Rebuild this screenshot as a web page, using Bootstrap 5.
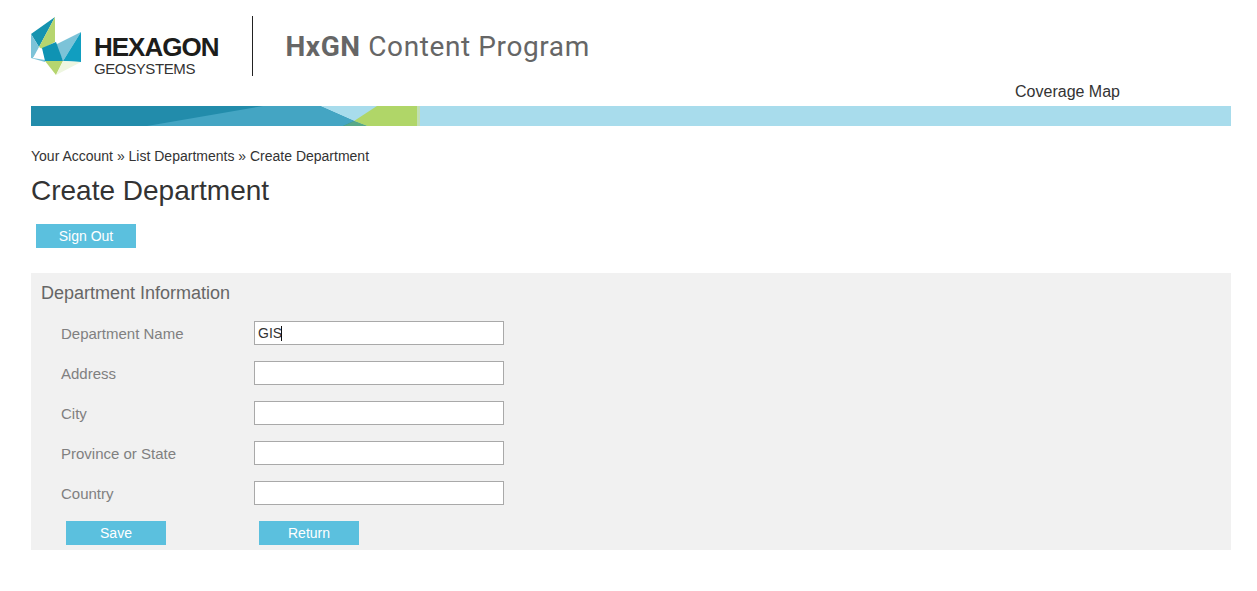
<!DOCTYPE html>
<html>
  <head>
    <title>Create Department</title>
    <link
      href="https://cdn.jsdelivr.net/npm/bootstrap@5.3.3/dist/css/bootstrap.min.css"
      rel="stylesheet"
    />
    <script src="https://cdn.jsdelivr.net/npm/bootstrap@5.3.3/dist/js/bootstrap.bundle.min.js"></script>
    <style>
      body {
        font-family: "Liberation Sans", Arial, sans-serif;
        color: #333;
        background: #fff;
      }
      .page-wrap {
        width: 1200px;
        margin-left: 31px;
      }
      .logo-row {
        height: 60px;
        margin-top: 16px;
      }
      .logo-words {
        margin-left: 13px;
        margin-top: 19px;
        color: #1d1d1b;
        line-height: 1;
      }
      .logo-name {
        font-size: 26px;
        font-weight: 700;
        letter-spacing: -1px;
        line-height: 24px;
      }
      .logo-sub {
        font-size: 15px;
        letter-spacing: -0.4px;
        line-height: 15px;
        margin-top: 2px;
        color: #333;
      }
      .logo-divider {
        width: 1px;
        height: 60px;
        background: #222;
        margin-left: 34px;
        margin-right: 32px;
      }
      .program-title {
        font-family: Roboto, sans-serif;
        font-size: 28px;
        color: #666;
        letter-spacing: 0.6px;
        line-height: 62px;
      }
      .top-link {
        color: #333;
        font-size: 16px;
        line-height: 18px;
        margin-top: 7px;
        padding-right: 111px;
        text-decoration: none;
      }
      .banner-strip {
        display: block;
        width: 1200px;
        height: 20px;
        margin-top: 5px;
      }
      .crumbs {
        font-size: 14px;
        line-height: 16px;
        margin-top: 22px;
        color: #333;
      }
      .crumbs a {
        color: #333;
        text-decoration: none;
      }
      .page-title {
        font-size: 28px;
        font-weight: 400;
        line-height: 32px;
        margin: 11px 0 0;
        color: #333;
      }
      .blue-btn {
        display: block;
        width: 100px;
        height: 24px;
        padding: 0;
        border: 0;
        border-radius: 0;
        background: #5bc0de;
        color: #fff;
        font-size: 14px;
        line-height: 24px;
        text-align: center;
      }
      .signout-row {
        padding-left: 5px;
        margin-top: 17px;
      }
      .info-panel {
        background: #f1f1f1;
        margin-top: 25px;
        height: 277px;
        padding: 10px 10px 0;
      }
      .info-title {
        font-size: 18px;
        font-weight: 400;
        line-height: 20px;
        color: #666;
        margin: 0 0 18px;
      }
      .field-row {
        height: 24px;
        margin-bottom: 16px;
        padding-left: 20px;
      }
      .field-label {
        width: 193px;
        margin: 0;
        font-size: 15px;
        line-height: 26px;
        color: #808080;
      }
      .field-box {
        width: 250px;
        height: 24px;
      }
      .field-box input {
        display: block;
        width: 250px;
        height: 24px;
        padding: 0 3px;
        border: 1px solid #a9a9a9;
        border-radius: 0;
        background: #fff;
        color: #333;
        font-size: 14px;
        outline: 0;
      }
      .text-caret {
        position: absolute;
        left: 27px;
        top: 5px;
        width: 1px;
        height: 15px;
        background: #111;
      }
      .action-row {
        padding-left: 25px;
      }
      .action-gap {
        margin-left: 93px;
      }
    </style>
  </head>
  <body>
    <div class="page-wrap">
      <div class="logo-row d-flex align-items-start">
        <svg width="50" height="59" viewBox="0 0 50 59" class="flex-shrink-0" style="margin-top: 1px">
          <polygon points="0,17 24,0 8,30" fill="#1593b0" />
          <polygon points="0,17 8,30 2,41 0,41" fill="#7cc3d8" />
          <polygon points="24,0 24,25 11,32 8,30" fill="#b6d56f" />
          <polygon points="2,41 11,31 14,43" fill="#ffffff" />
          <polygon points="0,41 2,41 14,43 14,45" fill="#7cc3d8" />
          <polygon points="24,28 50,15 32,44" fill="#7cc3d8" />
          <polygon points="50,15 50,45 32,44" fill="#119ec0" />
          <polygon points="11,31 25,25 32,44 14,44" fill="#0f93b3" />
          <polygon points="14,44 32,44 25,58" fill="#b6d56f" />
          <polygon points="32,44 50,45 25,58" fill="#eef6e0" />
        </svg>
        <div class="logo-words">
          <div class="logo-name">HEXAGON</div>
          <div class="logo-sub">GEOSYSTEMS</div>
        </div>
        <div class="logo-divider flex-shrink-0"></div>
        <div class="program-title"><b>HxGN</b> Content Program</div>
      </div>
      <div class="d-flex justify-content-end">
        <a href="#" class="top-link">Coverage Map</a>
      </div>
      <svg class="banner-strip" viewBox="0 0 1200 20" preserveAspectRatio="none">
        <rect width="1200" height="20" fill="#a8dcec" />
        <polygon points="0,0 289,0 323,15 336,20 0,20" fill="#228cab" />
        <polygon points="116,20 232,0 289,0 323,15 312,20" fill="#44a5c3" />
        <polygon points="346,0 386,0 386,20 336,20 323,15" fill="#b0d668" />
        <polygon points="312,20 323,15 336,20" fill="#58a888" />
        <rect x="386" width="3" height="20" fill="#c0dfb4" />
      </svg>
      <div class="crumbs">
        <a href="#">Your Account</a> » <a href="#">List Departments</a> » Create Department
      </div>
      <h1 class="page-title">Create Department</h1>
      <div class="signout-row">
        <button type="button" class="btn blue-btn">Sign Out</button>
      </div>
      <div class="info-panel">
        <h2 class="info-title">Department Information</h2>
        <form>
          <div class="field-row d-flex">
            <label class="field-label">Department Name</label>
            <div class="field-box position-relative">
              <input type="text" value="GIS" />
              <span class="text-caret"></span>
            </div>
          </div>
          <div class="field-row d-flex">
            <label class="field-label">Address</label>
            <div class="field-box"><input type="text" /></div>
          </div>
          <div class="field-row d-flex">
            <label class="field-label">City</label>
            <div class="field-box"><input type="text" /></div>
          </div>
          <div class="field-row d-flex">
            <label class="field-label">Province or State</label>
            <div class="field-box"><input type="text" /></div>
          </div>
          <div class="field-row d-flex">
            <label class="field-label">Country</label>
            <div class="field-box"><input type="text" /></div>
          </div>
          <div class="action-row d-flex">
            <button type="button" class="btn blue-btn">Save</button>
            <button type="button" class="btn blue-btn action-gap">Return</button>
          </div>
        </form>
      </div>
    </div>
  </body>
</html>
